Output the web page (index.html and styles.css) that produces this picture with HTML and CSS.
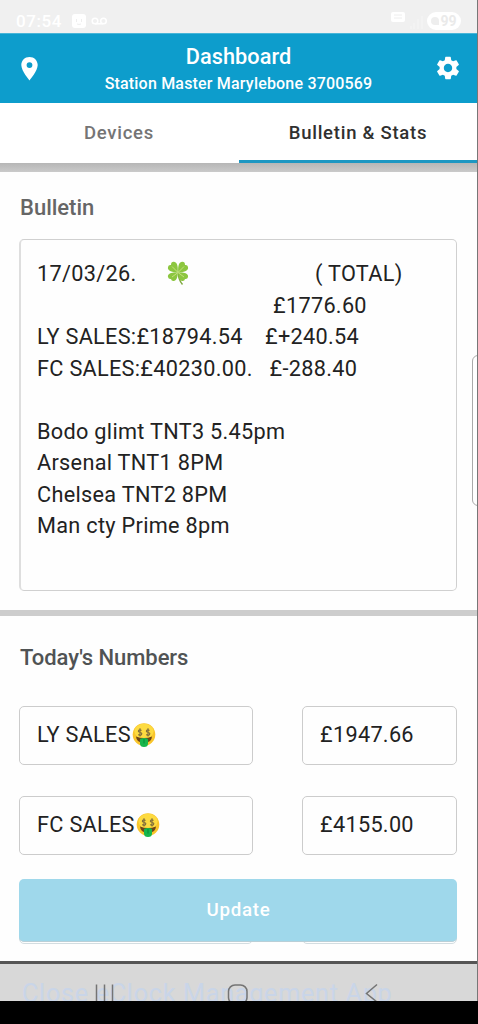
FILE: index.html
```html
<!DOCTYPE html>
<html lang="en">
<head>
<meta charset="utf-8">
<title>Dashboard</title>
<link rel="stylesheet" href="styles.css">
</head>
<body>
<svg class="defs" width="0" height="0">
  <symbol id="money-face" viewBox="0 0 24 24">
    <circle cx="12" cy="11.5" r="11.3" fill="#f9c52c"/>
    <ellipse cx="12" cy="8.5" rx="9.5" ry="7.8" fill="#fddb40"/>
    <path d="M4 13.5Q12 16.5 20 13.5Q19.500 20 12 20Q4.500 20 4 13.500Z" fill="#6d4519"/>
    <path d="M8 16Q12 13.800 16 16V20.500Q16 24 12 24Q8 24 8 20.500Z" fill="#17b64c"/>
    <path d="M12 16V20.500" stroke="#078b37" stroke-width="1"/>
    <g fill="none" stroke="#7d6a3b" stroke-width="1.100">
      <path d="M9.500 7.500Q7.500 6 6.600 7.500T8.200 9.500T9.300 11.800Q8 13 6.300 11.500M8 5.300V13.500"/>
      <path d="M17.500 7.500Q15.500 6 14.600 7.500T16.200 9.500T17.300 11.800Q16 13 14.300 11.500M16 5.300V13.500"/>
    </g>
  </symbol>
</svg>
<div class="screen">
  <div class="status">
    <span class="clock">07:54</span>
    <svg class="st-app" width="14" height="14" viewBox="0 0 14 14"><rect width="14" height="14" rx="3" fill="#fff"/><path d="M4.500 5V8M9.500 5V8M5 10Q7 11 9 10" stroke="#eee" fill="none"/></svg>
    <svg class="st-vm" width="17" height="8" viewBox="0 0 17 8" fill="none" stroke="#fff" stroke-width="1.500"><circle cx="4" cy="4" r="2.800"/><path d="M4 6.800H12"/><circle cx="12.500" cy="4" r="2.800"/></svg>
    <svg class="st-net" width="34" height="20" viewBox="0 0 34 20"><rect x="1" y="1" width="14" height="10" rx="2" fill="#fff"/><path d="M4 4H12M4 7H12" stroke="#eee"/><path d="M21 18V15M24 18V12M28 18V8M32 18V5" stroke="#f3f3f3" stroke-width="2"/></svg>
    <span class="battery"><i class="leaf"></i>99</span>
  </div>
  <header class="header">
    <svg class="pin" width="17" height="24" viewBox="0 0 17 24"><path fill="#fff" fill-rule="evenodd" d="M8.500 0C3.800 0 .3 3.500.3 8.100C.3 14 8.500 23.500 8.500 23.500S16.700 14 16.700 8.100C16.700 3.500 13.200 0 8.500 0ZM8.500 5.200A2.900 2.900 0 1 1 8.500 11A2.900 2.900 0 1 1 8.500 5.200Z"/></svg>
    <div class="titles"><h1>Dashboard</h1><p>Station Master Marylebone 3700569</p></div>
    <svg class="gear" width="28" height="28" viewBox="0 0 24 24"><path fill="#fff" d="M19.140 12.940c.04-.3.060-.61.060-.94 0-.32-.02-.64-.07-.94l2.030-1.580c.18-.14.23-.41.120-.61l-1.920-3.320c-.12-.22-.37-.29-.59-.22l-2.390.96c-.5-.38-1.030-.7-1.620-.94l-.36-2.540c-.04-.24-.24-.41-.48-.41h-3.840c-.24 0-.43.170-.47.410l-.36 2.540c-.59.240-1.130.570-1.620.940l-2.390-.96c-.22-.08-.47 0-.59.220L2.740 8.870c-.12.210-.08.470.120.610l2.030 1.580c-.05.300-.09.630-.09.940s.02.640.070.940l-2.030 1.580c-.18.140-.23.410-.12.610l1.920 3.320c.12.220.37.290.59.220l2.390-.96c.5.380 1.030.7 1.620.94l.36 2.540c.05.240.24.410.48.410h3.840c.24 0 .44-.17.470-.41l.36-2.540c.59-.24 1.130-.56 1.620-.94l2.390.96c.22.080.47 0 .59-.22l1.920-3.320c.12-.22.070-.47-.12-.61l-2.010-1.580zM12 15.600c-1.980 0-3.600-1.620-3.600-3.600s1.620-3.600 3.600-3.600 3.600 1.620 3.600 3.600-1.620 3.600-3.600 3.600z"/></svg>
  </header>
  <nav class="tabs"><a class="tab">Devices</a><a class="tab active">Bulletin &amp; Stats</a></nav>
  <div class="shade"></div>
  <section class="bulletin">
    <h2>Bulletin</h2>
    <div class="note">
      <div class="line"><span class="date">17/03/26.</span>
        <svg class="clover" width="22" height="25" viewBox="0 0 22 25"><path d="M11 11Q11.500 19 15.500 23.500" fill="none" stroke="#7fa83e" stroke-width="1.500"/><g fill="#8cc63f"><path d="M10.700 11.500C6 11.500 0 10 1 6Q1.500 3.500 4 4Q4 .5 7 .8C11 1.500 11 7 10.700 11.500Z"/><path d="M11.300 11.500C16 11.500 22 10 21 6Q20.500 3.500 18 4Q18 .5 15 .8C11 1.500 11 7 11.300 11.500Z"/><path d="M10.700 11.500C6 11 0 12 1 16Q1.500 18.500 4 18Q4.500 20.500 7 20C10.500 19 10.500 15 10.700 11.500Z"/><path d="M11.300 11.500C16 11 22 12 21 16Q20.500 18.500 18 18Q17.500 20.500 15 20C11.500 19 11.500 15 11.300 11.500Z"/></g><path d="M5 5.500L11 11.500L17 5.500M5 16L11 11.500L17 16" fill="none" stroke="#c5e07b" stroke-width="1"/></svg>
        <span class="total">( TOTAL)</span></div>
      <div class="line"><span class="sum">£1776.60</span></div>
      <div class="line"><span class="ly">LY SALES:£18794.54</span><span>£+240.54</span></div>
      <div class="line"><span class="fc">FC SALES:£40230.00.</span><span>£-288.40</span></div>
      <div class="line"></div>
      <div class="line">Bodo glimt TNT3 5.45pm</div>
      <div class="line">Arsenal TNT1 8PM</div>
      <div class="line">Chelsea TNT2 8PM</div>
      <div class="line">Man cty Prime 8pm</div>
    </div>
  </section>
  <div class="divider"></div>
  <section class="numbers">
    <h2>Today's Numbers</h2>
    <div class="row"><div class="field">LY SALES<svg class="face" width="24" height="24"><use href="#money-face"/></svg></div><div class="field">£1947.66</div></div>
    <div class="row"><div class="field">FC SALES<svg class="face" width="24" height="24"><use href="#money-face"/></svg></div><div class="field">£4155.00</div></div>
    <div class="row"><div class="field peek"></div><div class="field peek"></div></div>
    <button class="update">Update</button>
  </section>
  <footer class="bottom">
    <span class="link">Close eClock Management App</span>
    <svg class="nav" width="478" height="37" viewBox="0 0 478 37" fill="none" stroke="#747474" stroke-width="1.500"><path d="M96.500 20.500V38M104.500 20.500V38M112.500 20.500V38M377 20.500L366.500 29.500L377 38"/><rect x="228.500" y="21" width="18.500" height="19" rx="6.500"/></svg>
  </footer>
  <div class="black"></div>
  <div class="handle"></div>
  <div class="edge"></div>
</div>
</body>
</html>
```
FILE: styles.css
```css
* { box-sizing: border-box; }
body { margin: 0; font-family: Roboto, sans-serif; background: #fff; }
h1, h2, p { margin: 0; }
svg { display: block; flex: none; }
.defs { position: absolute; }
.screen { position: relative; width: 478px; height: 1024px; overflow: hidden; display: flex; flex-direction: column; background: #fefefe; }
.screen > * { flex: none; }
.status { height: 33px; background: #f0f0f0; color: #fff; display: flex; align-items: center; padding: 9px 17px 0 16px; }
.clock { font-size: 17px; font-weight: 500; letter-spacing: .6px; width: 56px; }
.st-app { margin-right: 5px; }
.st-net { margin-left: auto; margin-right: 3px; }
.battery { display: flex; align-items: center; justify-content: center; gap: 1px; width: 34px; height: 18px; border-radius: 9px; background: #fff; color: #eaeaea; font-size: 14px; font-weight: 700; }
.leaf { width: 8px; height: 8px; border-radius: 4px 4px 0 4px; background: #eee; }
.header { height: 70px; background: #0d9dcc; color: #fff; display: flex; align-items: center; justify-content: space-between; padding: 0 16px 1px 21px; border-top: 1px solid #47b5d8; }
.pin { margin-top: 1px; }
.titles { text-align: center; padding: 3px 0 0 5px; }
.titles h1 { font-size: 21.700px; line-height: 28px; font-weight: 500; letter-spacing: .05px; }
.titles p { font-size: 16px; line-height: 24px; font-weight: 500; letter-spacing: .19px; padding-top: 1px; }
.tabs { height: 60px; display: flex; background: #fff; }
.tab { flex: 1; display: flex; align-items: center; justify-content: center; font-size: 18.500px; font-weight: 500; letter-spacing: .75px; color: #757575; padding: 2px 1px 0 0; border-bottom: 3px solid transparent; }
.tab.active { color: #303030; border-color: #1d97c2; }
.shade { height: 9px; background: linear-gradient(#b6b6b6, #cacaca); }
.bulletin { height: 438px; padding: 22px 21px 0 19px; }
h2 { font-size: 22px; line-height: 28px; font-weight: 500; color: #666; padding-left: 1px; }
.note { margin-top: 17px; height: 352px; border: 1px solid #d0d0d0; border-left: 2px solid #dedede; border-radius: 5px; padding: 18.400px 16px; font-size: 21.700px; letter-spacing: .3px; color: #222; }
.line { height: 31.500px; line-height: 31.500px; display: flex; white-space: pre; }
.date { width: 130px; }
.clover { margin-top: 3px; }
.total { margin-left: 126px; }
.sum { margin-left: 236px; }
.ly { width: 228px; }
.fc { width: 232.500px; }
.divider { height: 6px; background: #cdcdcd; }
.numbers { position: relative; height: 345px; padding: 28px 21px 0 19px; overflow: hidden; }
.numbers h2 { color: #505354; margin-bottom: 34px; letter-spacing: -.06px; }
.row { display: grid; grid-template-columns: 234px 155px; justify-content: space-between; margin-bottom: 31px; }
.field { height: 59px; border: 1px solid #ccc; border-radius: 5px; padding: 0 16.500px 2px 17px; display: flex; align-items: center; font-size: 21.700px; letter-spacing: .3px; color: #222; }
.face { margin: 1px 0 0 1px; }
.peek { height: 58px; border-color: #d3dde1; }
.update { position: absolute; left: 19px; top: 263px; width: 438px; height: 63px; border: 0; border-bottom: 1px solid #b9cfd7; border-radius: 5px; background: #9fd8eb; color: #fff; font: 500 18.700px Roboto, sans-serif; letter-spacing: .7px; padding: 0 0 0 1px; }
.bottom { position: relative; height: 40px; border-top: 3px solid #555; background: #d8d8d8; overflow: hidden; padding: 14px 0 0 22px; }
.link { font-size: 25.300px; line-height: 32px; letter-spacing: .65px; color: #c9d5e8; white-space: nowrap; }
.nav { position: absolute; left: 0; top: 0; }
.black { height: 23px; background: #000; }
.handle { position: absolute; right: -8px; top: 355px; width: 14px; height: 151px; border: 1.500px solid #aaa; border-radius: 6px; background: #fff; }
.edge { position: absolute; right: 0; top: 0; width: 1px; height: 1001px; background: #777; }
```
